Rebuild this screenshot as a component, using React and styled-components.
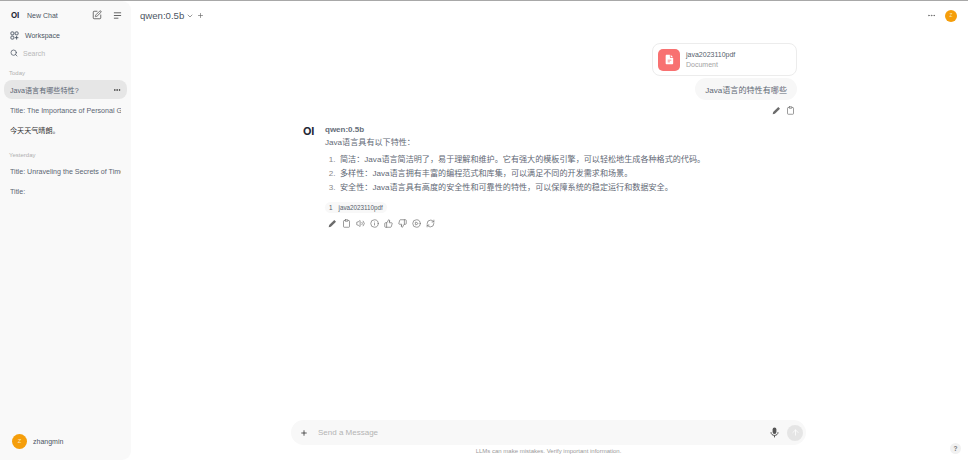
import React from "react";
import styled, { createGlobalStyle } from "styled-components";
import {
  Clipboard, Volume2, Info, ThumbsUp, ThumbsDown, CirclePlay, RefreshCw,
  ArrowUp, Plus, ChevronDown, Ellipsis, SquarePen, Search,
} from "lucide-react";

const Global = createGlobalStyle`
  html, body { margin: 0; padding: 0; background: #fff; }
  body { font-family: "Liberation Sans", "Noto Sans CJK SC", sans-serif; color: #4b5563; }
  * { box-sizing: border-box; }
`;

const Page = styled.div`
  width: 968px; height: 460px; display: flex; overflow: hidden; position: relative;
  border-top: 1px solid #a8a8a8; background: #fff;
`;
const Sidebar = styled.aside`
  width: 131px; flex: none; height: 100%; background: #f9f9f9;
  border-radius: 0 9px 9px 0; display: flex; flex-direction: column;
  padding: 0 4px;
`;
const SideTop = styled.div`
  height: 25px; padding: 3px 5px 0 7px; display: flex; align-items: center;
`;
const Logo = styled.span`
  display: block; font-size: ${p => p.$size || 8}px; font-weight: 700; color: #1f2937; line-height: 1;
  font-family: Inter, "Liberation Sans", sans-serif; letter-spacing: -0.2px;
`;
const NewChat = styled.span`
  font-size: 7px; color: #4b5563; margin-left: 8px; flex: 1;
`;
const TopIcons = styled.div`
  display: flex; align-items: center; gap: 11px; color: #555;
`;
const NavRow = styled.div`
  height: 18px; display: flex; align-items: center; gap: ${p => p.$gap}px; padding-left: 6px;
  font-size: 7px; color: ${p => p.$muted ? "#b8b8b8" : "#4b5563"};
  & svg { color: #4b5563; }
`;
const DayLabel = styled.div`
  font-size: 6px; color: #b0b0b0; padding-left: 5px; line-height: 8px;
  margin-top: ${p => p.$top}px; margin-bottom: 3px;
`;
const ChatItem = styled.div`
  height: 19px; margin-bottom: ${p => p.$gap ?? 0}px; display: flex; align-items: center; padding: 0 6px;
  font-size: 7.1px; border-radius: 8px; white-space: nowrap; overflow: hidden;
  color: ${p => p.$strong ? "#333" : "#5b6572"};
  background: ${p => p.$active ? "#e6e6e6" : "transparent"};
`;
const ItemText = styled.span`
  flex: 1; overflow: hidden; white-space: nowrap;
`;
const Spacer = styled.div`flex: 1;`;
const UserRow = styled.div`
  height: 38px; display: flex; align-items: center; gap: 6px; padding-left: 8px;
  font-size: 7px; font-weight: 500; color: #4b5563;
`;
const Avatar = styled.div`
  width: ${p => p.$size}px; height: ${p => p.$size}px; border-radius: 50%; background: #f59e0b;
  color: #fde7bd; font-size: ${p => p.$size * 0.38}px; display: flex; align-items: center; justify-content: center; flex: none;
`;
const Main = styled.main`
  flex: 1; min-width: 0; height: 100%; display: flex; flex-direction: column;
`;
const Header = styled.header`
  height: 29px; flex: none; display: flex; align-items: center; padding: 0 11px 0 9px;
`;
const ModelName = styled.span`
  font-size: 9.6px; font-weight: 500; color: #4b5563;
`;
const HeaderIcons = styled.div`
  display: flex; align-items: center; gap: 3px; margin-left: 2px; color: #666;
`;
const HeaderRight = styled.div`
  margin-left: auto; display: flex; align-items: center; gap: 9px; color: #666;
`;
const Thread = styled.div`
  flex: 1; min-height: 0; width: 515px; margin-left: 160px; padding: 13px 9px 0 12px;
  display: flex; flex-direction: column;
`;
const UserBlock = styled.section`
  display: flex; flex-direction: column; align-items: flex-end;
`;
const FileCard = styled.div`
  width: 145px; height: 33px; border: 1px solid #ececec; border-radius: 8px; background: #fff;
  display: flex; align-items: center; gap: 6px; padding-left: 5px;
`;
const FileIcon = styled.div`
  width: 22px; height: 22px; border-radius: 5px; background: #f87171; color: #fff;
  display: flex; align-items: center; justify-content: center;
`;
const FileMeta = styled.div`
  display: flex; flex-direction: column; gap: 1px; line-height: 9px;
`;
const FileName = styled.span`font-size: 7px; font-weight: 500; color: #555e6c;`;
const FileKind = styled.span`font-size: 7px; color: #a3a3a3;`;
const Bubble = styled.div`
  height: 22px; margin-top: 2px; padding: 0 10px; border-radius: 11px; background: #f7f7f7;
  font-size: 8.1px; color: #5f6875; display: flex; align-items: center;
`;
const Actions = styled.div`
  display: flex; align-items: center; gap: ${p => p.$gap}px; color: #6b6b6b;
  margin-top: ${p => p.$top}px; padding-right: ${p => p.$right || 0}px; padding-left: ${p => p.$left || 0}px;
`;
const Assistant = styled.section`
  display: flex; gap: 10px; margin-top: 9px;
`;
const LogoCell = styled.div`
  width: 12px; flex: none; padding-top: 2px;
`;
const Reply = styled.div`
  flex: 1; min-width: 0; display: flex; flex-direction: column;
`;
const Author = styled.div`
  font-size: 8px; font-weight: 700; color: #666e7a; line-height: 11px;
`;
const Para = styled.p`
  margin: 1px 0 0; font-size: 8.1px; line-height: 14px; color: #5f6875;
`;
const Steps = styled.ol`
  margin: 3px 0 0; padding: 0 0 0 15px; font-size: 8.1px; line-height: 14px; color: #5f6875;
  & li::marker { color: #8a8a8a; content: counter(list-item) ".\\00a0\\00a0"; }
`;
const Source = styled.div`
  align-self: flex-start; height: 11px; margin-top: 7px; padding: 0 4px; border-radius: 6px; background: #f8f8f8;
  display: flex; align-items: center; gap: 6px; font-size: 6.3px; color: #555e6c;
`;
const Composer = styled.div`
  width: 515px; height: 25px; margin-left: 160px; flex: none; border-radius: 12.5px; background: #f8f8f8;
  display: flex; align-items: center; padding: 0 3px 0 9px; color: #333;
`;
const Placeholder = styled.span`
  font-size: 8px; color: #b4b4b4; margin-left: 10px; flex: 1;
`;
const Send = styled.div`
  width: 16px; height: 16px; border-radius: 50%; background: #e5e5e5; color: #fff; margin-left: 8px;
  display: flex; align-items: center; justify-content: center;
`;
const Notice = styled.div`
  height: 15px; width: 515px; margin-left: 160px; flex: none; text-align: center; padding-top: 2px;
  font-size: 6px; line-height: 8px; color: #9a9a9a;
`;
const Help = styled.div`
  position: absolute; right: 7px; bottom: 6px; width: 11px; height: 11px; border-radius: 50%;
  background: #f1f1f1; color: #777; font-size: 6.5px; font-weight: 700;
  display: flex; align-items: center; justify-content: center;
`;

const SolidPencil = () => (
  <svg width="9" height="9" viewBox="0 0 10 10" fill="currentColor">
    <path d="M7 1.1 8.9 3 3.2 8.7.8 9.2 1.3 6.8Z" />
  </svg>
);
const WorkspaceIcon = () => (
  <svg width="9" height="9" viewBox="0 0 10 10" fill="none" stroke="currentColor" strokeWidth="1">
    <rect x="1" y="1" width="3.3" height="3.3" rx="1" />
    <rect x="5.7" y="1" width="3.3" height="3.3" rx="1" />
    <rect x="1" y="5.7" width="3.3" height="3.3" rx="1" />
    <path d="M7.35 5.5v4M5.4 7.4h3.9" />
  </svg>
);
const DocIcon = () => (
  <svg width="11" height="11" viewBox="0 0 12 12" fill="#fff">
    <path fillRule="evenodd" d="M3 .8h3.4v2.6c0 .6.4 1 1 1H10v5.6c0 .7-.5 1.2-1.2 1.2H3c-.7 0-1.2-.5-1.2-1.2V2C1.8 1.3 2.3.8 3 .8Zm1 5.4v.9h4v-.9Zm0 2v.9h2.4v-.9Z" />
    <path d="M7.3.9 9.9 3.5H7.6a.3.3 0 0 1-.3-.3Z" />
  </svg>
);
const MicIcon = () => (
  <svg width="9" height="11" viewBox="0 0 9 11" fill="none" stroke="#555" strokeWidth="1">
    <rect x="2.6" y="0.5" width="3.8" height="6.4" rx="1.9" fill="#555" stroke="none" />
    <path d="M1 5.2c0 2 1.5 3.2 3.5 3.2S8 7.2 8 5.2M4.5 8.4v2" />
  </svg>
);

export default function App() {
  return (
    <Page>
      <Global />
      <Sidebar>
        <SideTop>
          <Logo>OI</Logo>
          <NewChat>New Chat</NewChat>
          <TopIcons>
            <SquarePen size={10} strokeWidth={2} />
            <svg width="9" height="9" viewBox="0 0 10 10" stroke="currentColor" strokeWidth="1" fill="none">
              <path d="M1 2h8M1 5h8M1 8h5" />
            </svg>
          </TopIcons>
        </SideTop>
        <NavRow $gap={6}><WorkspaceIcon /><span>Workspace</span></NavRow>
        <NavRow $muted $gap={5}><Search size={8} strokeWidth={2.2} /><span>Search</span></NavRow>
        <DayLabel $top={7}>Today</DayLabel>
        <ChatItem $active $gap={2}>
          <ItemText>Java语言有哪些特性?</ItemText>
          <Ellipsis size={8} strokeWidth={3} color="#444" />
        </ChatItem>
        <ChatItem><ItemText>Title: The Importance of Personal G</ItemText></ChatItem>
        <ChatItem $strong><ItemText>今天天气晴朗。</ItemText></ChatItem>
        <DayLabel $top={12}>Yesterday</DayLabel>
        <ChatItem $gap={1}><ItemText>Title: Unraveling the Secrets of Time</ItemText></ChatItem>
        <ChatItem><ItemText>Title:</ItemText></ChatItem>
        <Spacer />
        <UserRow>
          <Avatar $size={15}>Z</Avatar>
          <span>zhangmin</span>
        </UserRow>
      </Sidebar>
      <Main>
        <Header>
          <ModelName>qwen:0.5b</ModelName>
          <HeaderIcons>
            <ChevronDown size={8} strokeWidth={2} />
            <Plus size={7} strokeWidth={2.2} />
          </HeaderIcons>
          <HeaderRight>
            <Ellipsis size={9} strokeWidth={2} />
            <Avatar $size={12}>Z</Avatar>
          </HeaderRight>
        </Header>
        <Thread>
          <UserBlock>
            <FileCard>
              <FileIcon><DocIcon /></FileIcon>
              <FileMeta>
                <FileName>java2023110pdf</FileName>
                <FileKind>Document</FileKind>
              </FileMeta>
            </FileCard>
            <Bubble>Java语言的特性有哪些</Bubble>
            <Actions $gap={5} $top={6} $right={2}>
              <SolidPencil />
              <Clipboard size={9} strokeWidth={1.8} />
            </Actions>
          </UserBlock>
          <Assistant>
            <LogoCell><Logo $size={11}>OI</Logo></LogoCell>
            <Reply>
              <Author>qwen:0.5b</Author>
              <Para>Java语言具有以下特性：</Para>
              <Steps>
                <li>简洁：Java语言简洁明了，易于理解和维护。它有强大的模板引擎，可以轻松地生成各种格式的代码。</li>
                <li>多样性：Java语言拥有丰富的编程范式和库集，可以满足不同的开发需求和场景。</li>
                <li>安全性：Java语言具有高度的安全性和可靠性的特性，可以保障系统的稳定运行和数据安全。</li>
              </Steps>
              <Source><span>1</span><span>java2023110pdf</span></Source>
              <Actions $gap={5} $top={6} $left={3}>
                <SolidPencil />
                <Clipboard size={9} strokeWidth={1.8} />
                <Volume2 size={9} strokeWidth={1.8} />
                <Info size={9} strokeWidth={1.8} />
                <ThumbsUp size={9} strokeWidth={1.8} />
                <ThumbsDown size={9} strokeWidth={1.8} />
                <CirclePlay size={9} strokeWidth={1.8} />
                <RefreshCw size={9} strokeWidth={1.8} />
              </Actions>
            </Reply>
          </Assistant>
        </Thread>
        <Composer>
          <Plus size={8} strokeWidth={2.4} />
          <Placeholder>Send a Message</Placeholder>
          <MicIcon />
          <Send><ArrowUp size={9} strokeWidth={2} /></Send>
        </Composer>
        <Notice>LLMs can make mistakes. Verify important information.</Notice>
      </Main>
      <Help>?</Help>
    </Page>
  );
}
